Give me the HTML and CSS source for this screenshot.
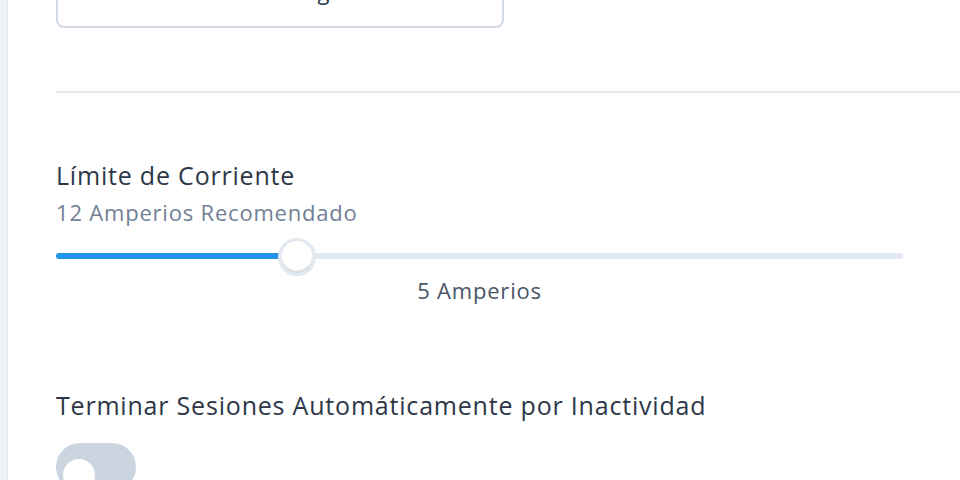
FILE: index.html
```html
<!DOCTYPE html>
<html lang="es">
<head>
    <meta charset="UTF-8">
    <title>Ajustes del cargador</title>
    <link rel="stylesheet" href="styles.css">
</head>
<body>
<div class="page">
    <div class="rail"></div>
    <div class="settings">
        <div class="actions">
            <a class="btn">Reiniciar Cargador</a>
        </div>
        <div class="divider"></div>

        <div class="field">
            <div class="field-title">Límite de Corriente</div>
            <div class="field-hint">12 Amperios Recomendado</div>
            <div class="slider">
                <div class="slider-track">
                    <div class="slider-fill" style="width: 28.5%"></div>
                    <div class="slider-thumb" style="left: 28.5%"></div>
                </div>
                <div class="slider-value">5 Amperios</div>
            </div>
        </div>

        <div class="field field-toggle">
            <div class="field-title">Terminar Sesiones Automáticamente por Inactividad</div>
            <div class="toggle">
                <span class="toggle-knob"></span>
            </div>
        </div>
    </div>
</div>
</body>
</html>
```

FILE: styles.css
```css
* {
    margin: 0;
    padding: 0;
    box-sizing: border-box;
}

html, body {
    height: 100%;
    overflow: hidden;
}

body {
    font-family: "Open Sans", "Lato", sans-serif;
    letter-spacing: 0.8px;
    color: #2d3748;
    background: #fff;
}

.page {
    display: flex;
    height: 100%;
}

/* barra lateral gris */
.rail {
    width: 8px;
    flex-shrink: 0;
    background: #edf2f7;
    border-right: 1px solid #e2e8f0;
}

.settings {
    flex: 1;
    padding-left: 48px;
    margin-top: -30px;
}

.actions {
    width: 448px;
}

.btn {
    display: block;
    height: 58px;
    padding-top: 5px;
    line-height: 28px;
    border: 2px solid #d2dae5;
    border-radius: 8px;
    text-align: center;
    font-size: 22px;
    color: #2d3748;
}

.divider {
    height: 2px;
    background: #e2e8f0;
    margin-top: 63px;
}

.field {
    margin-top: 66px;
}

.field-title {
    font-size: 25px;
    line-height: 32px;
    color: #2d3748;
}

.field-hint {
    margin-top: 9px;
    font-size: 22px;
    line-height: 24px;
    color: #718096;
}

.slider {
    width: 847px;
    margin-top: 29px;
}

.slider-track {
    position: relative;
    height: 6px;
    border-radius: 3px;
    background: #e2e8f0;
}

.slider-fill {
    height: 100%;
    border-radius: 3px;
    background: #2196e6;
}

.slider-thumb {
    position: absolute;
    top: 50%;
    width: 38px;
    height: 38px;
    margin: -18px 0 0 -19px;
    border-radius: 50%;
    background: #fff;
    border: 3px solid #e2e8f0;
    box-shadow: inset 0 -2px 2px rgba(113, 128, 150, 0.35);
}

.slider-value {
    margin-top: 19px;
    text-align: center;
    font-size: 22px;
    line-height: 24px;
    color: #4a5568;
}

.field-toggle {
    margin-top: 87px;
}

.toggle {
    width: 80px;
    height: 48px;
    margin-top: 22px;
    padding: 16px 0 0 7px;
    border-radius: 24px;
    background: #cbd5e0;
}

.toggle-knob {
    display: block;
    width: 32px;
    height: 32px;
    border-radius: 50%;
    background: #fff;
}
```
